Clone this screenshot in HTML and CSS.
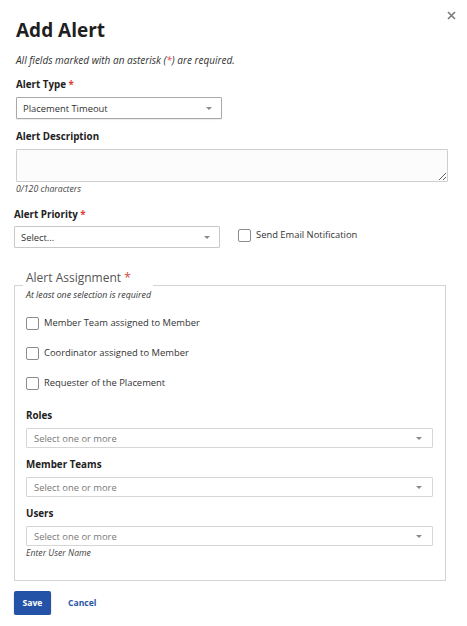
FILE: index.html
```html
<!DOCTYPE html>
<html lang="en">
<head>
<meta charset="utf-8">
<title>Add Alert</title>
<link rel="stylesheet" href="styles.css">
</head>
<body>
<div class="modal">
  <button class="close" aria-label="Close">
    <svg width="9" height="9" viewBox="0 0 9 9"><path d="M1 1 L8 8 M8 1 L1 8" stroke="#7a7a7a" stroke-width="1.6" fill="none"/></svg>
  </button>
  <div class="top">
    <h1 class="title">Add Alert</h1>
    <p class="note">All fields marked with an asterisk (<span class="req">*</span>) are required.</p>
    <label class="label l-type">Alert Type <span class="req">*</span></label>
    <div class="select select-type"><span>Placement Timeout</span><i class="caret"></i></div>
    <label class="label l-desc">Alert Description</label>
    <textarea class="desc"></textarea>
    <div class="count">0/120 characters</div>
  </div>
  <label class="label l-prio">Alert Priority <span class="req">*</span></label>
  <div class="prio-row">
    <div class="select select-prio"><span>Select...</span><i class="caret"></i></div>
    <label class="check email"><input type="checkbox"><span>Send Email Notification</span></label>
  </div>
  <fieldset class="assign">
    <legend>Alert Assignment <span class="req">*</span></legend>
    <div class="hint">At least one selection is required</div>
    <label class="check opt first"><input type="checkbox"><span>Member Team assigned to Member</span></label>
    <label class="check opt"><input type="checkbox"><span>Coordinator assigned to Member</span></label>
    <label class="check opt"><input type="checkbox"><span>Requester of the Placement</span></label>
    <label class="label l-roles">Roles</label>
    <div class="select multi"><span>Select one or more</span><i class="caret"></i></div>
    <label class="label l-sub">Member Teams</label>
    <div class="select multi"><span>Select one or more</span><i class="caret"></i></div>
    <label class="label l-sub">Users</label>
    <div class="select multi"><span>Select one or more</span><i class="caret"></i></div>
    <div class="count">Enter User Name</div>
  </fieldset>
  <div class="actions">
    <button class="save">Save</button>
    <button class="cancel">Cancel</button>
  </div>
</div>
</body>
</html>
```

FILE: styles.css
```css
* { box-sizing: border-box; }
html, body { margin: 0; padding: 0; background: #fff; }
body { font-family: "Open Sans", "Noto Sans", sans-serif; color: #222; }

.modal {
  position: relative;
  width: 467px;
  padding: 18px 21px 0 14px;
}

.close {
  position: absolute;
  top: 11px;
  left: 447px;
  width: 9px;
  height: 9px;
  padding: 0;
  border: 0;
  background: none;
  display: flex;
}

.top { margin-left: 2px; }

.title {
  margin: 0;
  font-size: 19px;
  line-height: 24px;
  font-weight: 700;
  color: #1f1f1f;
}

.note {
  margin: 11px 0 0;
  font-size: 10px;
  line-height: 14px;
  font-style: italic;
  color: #333;
}

.req { color: #d9423a; font-style: normal; }
.note .req { font-style: italic; }

.label {
  display: block;
  font-size: 9.8px;
  line-height: 14px;
  font-weight: 700;
  color: #222;
}
.l-type { margin-top: 11px; }
.l-desc { margin-top: 11px; }
.l-prio { margin-top: 13px; }
.l-roles { margin-top: 19px; }
.l-sub { margin-top: 10px; }

.select {
  display: flex;
  align-items: center;
  justify-content: space-between;
  margin-top: 5px;
  height: 22px;
  border: 1px solid #c8c8c8;
  border-radius: 1px;
  background: #fff;
  font-size: 9.4px;
  color: #333;
  padding: 0 9px 0 6px;
}
.select-type {
  width: 206px;
  border-color: #a9a9a9;
  box-shadow: 0 1px 1px rgba(0,0,0,0.08);
}
.select-prio { width: 206px; margin-top: 0; }

.caret {
  width: 0;
  height: 0;
  border-left: 3px solid transparent;
  border-right: 3px solid transparent;
  border-top: 3.5px solid #8a8a8a;
}

.desc {
  display: block;
  margin: 5px 0 0;
  width: 432px;
  height: 33px;
  border: 1px solid #cfcfcf;
  background: #fcfcfc;
  border-radius: 1px;
  resize: vertical;
  font-family: inherit;
}

.count {
  margin-top: 1px;
  font-size: 8.7px;
  line-height: 12px;
  font-style: italic;
  color: #444;
}

.prio-row {
  display: flex;
  align-items: flex-start;
  margin-top: 4px;
  gap: 18px;
}

.check {
  display: flex;
  align-items: center;
  gap: 5px;
  font-size: 9.4px;
  line-height: 14px;
  color: #333;
}
.check input {
  appearance: none;
  -webkit-appearance: none;
  margin: 0;
  width: 13px;
  height: 13px;
  border: 1px solid #8c8c8c;
  border-radius: 2px;
  background: #fff;
  flex: none;
}
.email { margin-top: 2px; }

.assign {
  margin: 21px 0 0;
  border: 1px solid #d4d4d4;
  padding: 0 12px 21px 11px;
  min-width: 0;
}
.assign legend {
  margin-left: -3px;
  padding: 0 22px 14px 3px;
  font-size: 12px;
  line-height: 18px;
  color: #555;
}

.hint {
  margin-top: -12px;
  font-size: 8.8px;
  line-height: 12px;
  font-style: italic;
  color: #333;
}

.opt { margin-top: 16px; }
.opt.first { margin-top: 15px; }

.multi {
  height: 20px;
  border-color: #d6d6d6;
  color: #7a7a7a;
  padding: 0 10px 0 7px;
}

.actions {
  display: flex;
  align-items: center;
  gap: 17px;
  margin-top: 10px;
}
.save {
  width: 37px;
  height: 24px;
  border: 0;
  border-radius: 2px;
  background: #2352a6;
  color: #fff;
  font-family: inherit;
  font-weight: 700;
  font-size: 8.6px;
  padding: 0;
  box-shadow: 0 1px 2px rgba(0,0,0,0.25);
}
.cancel {
  border: 0;
  background: none;
  padding: 0;
  font-family: inherit;
  font-weight: 700;
  font-size: 8.6px;
  color: #2a56a8;
}
```
